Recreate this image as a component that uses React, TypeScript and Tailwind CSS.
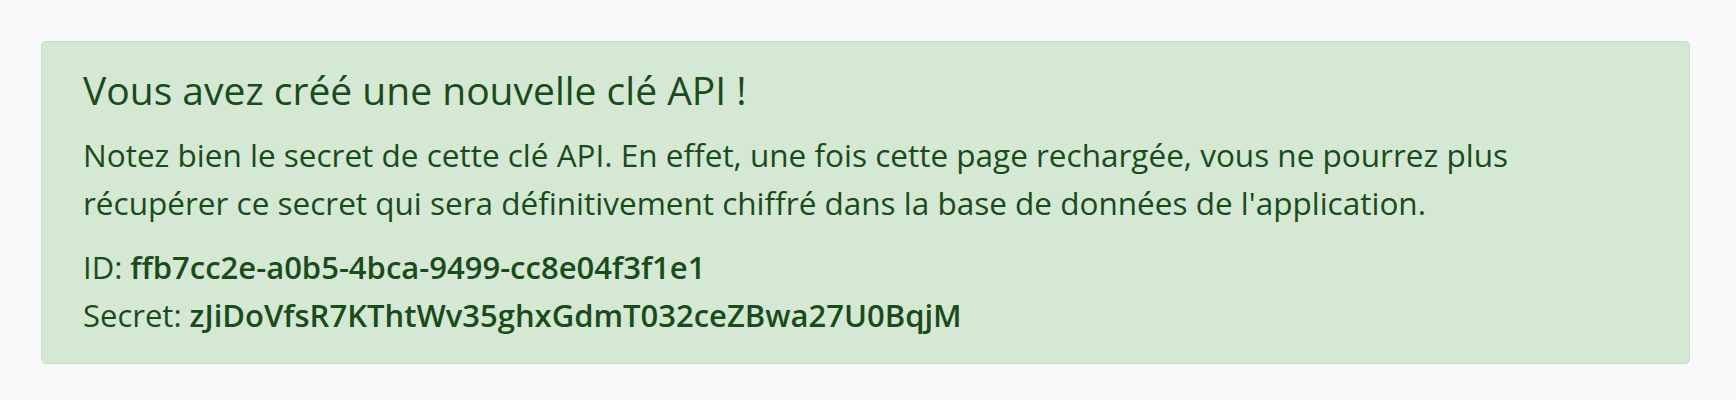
import React from 'react'

const secret = {
  id: 'ffb7cc2e-a0b5-4bca-9499-cc8e04f3f1e1',
  value: 'zJiDoVfsR7KThtWv35ghxGdmT032ceZBwa27U0BqjM',
}

export default function App() {
  return (
    <div className="min-h-[400px] bg-[#f8f9fb] pl-[41px] pr-[46px] pt-[41px] font-['Open_Sans',sans-serif] text-[#184c1a]">
      <div className="rounded-[5px] border border-[#c4dfc5] bg-[#d5e8d4] px-[41px] pb-[24px] pt-[24px]">
        <h4 className="mb-[18px] text-[39px] leading-[47px]">Vous avez créé une nouvelle clé API !</h4>
        <p className="mb-[16px] max-w-[1500px] text-[31.5px] leading-[48px]">
          Notez bien le secret de cette clé API. En effet, une fois cette page rechargée, vous ne pourrez plus
          récupérer ce secret qui sera définitivement chiffré dans la base de données de l'application.
        </p>
        <div className="text-[31px] leading-[48px]">
          ID: <strong className="font-semibold">{secret.id}</strong>
        </div>
        <div className="text-[31px] leading-[48px]">
          Secret: <strong className="font-semibold">{secret.value}</strong>
        </div>
      </div>
    </div>
  )
}
